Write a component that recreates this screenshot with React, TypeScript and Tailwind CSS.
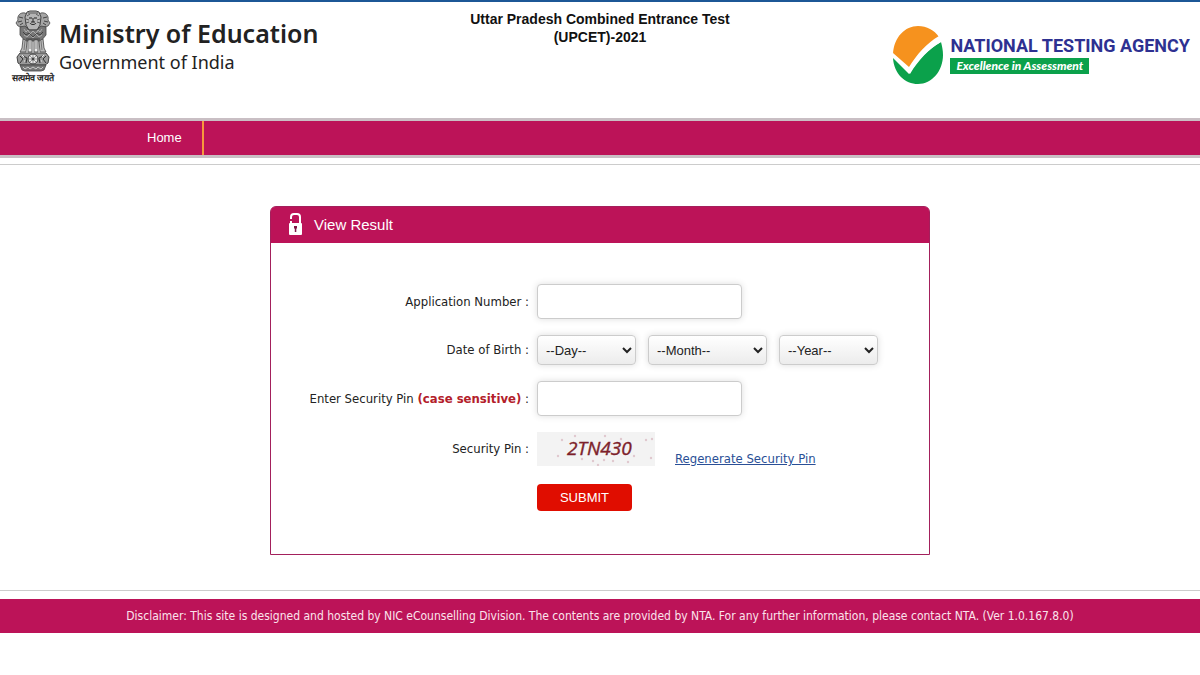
import type { ReactNode } from "react";

const days = Array.from({ length: 31 }, (_, i) => i + 1);
const months = ["January", "February", "March", "April", "May", "June", "July", "August", "September", "October", "November", "December"];
const years = Array.from({ length: 40 }, (_, i) => 2010 - i);

// specks of noise behind the captcha text
const specks = [
  [25, 8], [21, 24], [38, 4], [45, 27], [56, 29], [61, 33], [67, 28], [68, 4],
  [76, 29], [84, 7], [91, 30], [97, 24], [109, 8], [115, 7], [114, 26], [82, 20],
];

function Emblem() {
  return (
    <svg viewBox="0 0 36 62" className="h-[62px] w-9" fill="none" stroke="#444" aria-hidden="true">
      {/* side lions */}
      <path d="M10 3C5 2 2 6 3 10L1 13l2 3 4 1 3 8 5 2V6z" fill="#a5a5a5" strokeWidth=".8" />
      <path d="M26 3c5-1 8 3 7 7l2 3-2 3-4 1-3 8-5 2V6z" fill="#a5a5a5" strokeWidth=".8" />
      <path d="M4 7l4 1M3 12l4-1M5 15l3-2M32 7l-4 1M33 12l-4-1M31 15l-3-2" strokeWidth="1" />
      {/* front lion */}
      <path d="M12 2l3-1h6l3 1 2 5-1 8-3 5h-8l-3-5-1-8z" fill="#b5b5b5" strokeWidth="1" />
      <path d="M13 3h10M12 6l3-2M24 6l-3-2M11 9l3 1M25 9l-3 1M11 13l3-1M25 13l-3-1" strokeWidth=".8" />
      <path d="M14 8h3M19 8h3M18 8v4M15 13c1 2 5 2 6 0M16 12h4" stroke="#222" strokeWidth="1" />
      {/* mane */}
      <path d="M5 17l5-1 4 4h8l4-4 5 1v8l-5 6H10l-5-6z" fill="#777" strokeWidth=".8" />
      <path d="M9 19l2 3 2-2 2 4 3-3 3 3 2-4 2 2 2-3M9 25l3 2 3-3 3 4 3-4 3 3 3-2" stroke="#bbb" strokeWidth=".8" />
      <path d="M8 22l3 3 3-2 4 4 4-4 3 2 3-3M11 29h14" stroke="#333" strokeWidth=".8" />
      {/* legs */}
      <path d="M8 29l-1 9-2 4h6l1-11zM28 29l1 9 2 4h-6l-1-11z" fill="#bbb" strokeWidth=".8" />
      <path d="M13 30v12h4V30zM19 30v12h4V30z" fill="#eee" strokeWidth=".9" />
      <path d="M10 31l-1 9M15 31v8M21 31v8M26 31l1 9" stroke="#666" strokeWidth=".8" />
      {/* abacus with the wheel */}
      <path d="M5 43h26l3 4-1 6-3 2H6l-3-2-1-6z" fill="#999" strokeWidth="1" />
      <path d="M5 46l3 3-3 4M8 46l4 2-1 5M31 46l-3 3 3 4M28 46l-4 2 1 5" stroke="#333" strokeWidth="1" />
      <path d="M7 45l2 2M29 45l-2 2M9 51h1M26 51h1" stroke="#eee" strokeWidth="1" />
      <circle cx="18" cy="49" r="5" fill="#e8e8e8" strokeWidth="1" />
      <circle cx="18" cy="49" r="1.2" fill="#444" strokeWidth=".5" />
      <path d="M18 44v10M13 49h10M14.500 45.500l7 7M21.500 45.500l-7 7" strokeWidth=".5" />
      {/* base */}
      <path d="M5 55h26l-2 5-3 1H10l-3-1z" fill="#777" strokeWidth=".8" />
      <path d="M8 57l2 2 3-2 2 2 3-2 3 2 2-2 3 2 2-2" stroke="#ddd" strokeWidth=".8" />
    </svg>
  );
}

function AgencyMark() {
  return (
    <svg viewBox="0 0 50 58" className="h-[58px] w-[50px]" aria-hidden="true">
      <path d="M0 28C1 11 12 0 25 0c9 0 16 4 21 11C32 20 25 28 16 42z" fill="#f6921e" />
      <path d="M48 16c1 4 2 8 2 13 0 16-11 29-25 29C12 58 1 48 0 32l16 16C25 34 34 24 48 16z" fill="#0ba14b" />
      <path d="M0 27l16 14C24 28 34 17 46 10l2 6C36 23 26 33 17 48L0 31z" fill="#fff" />
    </svg>
  );
}

function Lock() {
  return (
    <svg viewBox="0 0 14 22" className="mb-[3px] h-[22px] w-3.5" aria-hidden="true">
      <path d="M3 6V4q0-3 3-3h3q3 0 3 3v7M3 8v3" fill="none" stroke="#fff" strokeWidth="2" />
      <rect x="1" y="10" width="13" height="12" rx="1" fill="#fff" />
      <path d="M6 13h3v2.500h-.7V19H6.800v-3.500H6z" fill="#7d1745" />
    </svg>
  );
}

function Label({ htmlFor, children }: { htmlFor?: string; children: ReactNode }) {
  return (
    <label htmlFor={htmlFor} className="text-right">
      {children} :
    </label>
  );
}

function DateSelect({ id, label, options, className }: {
  id: string;
  label: string;
  options: (string | number)[];
  className: string;
}) {
  return (
    <select
      id={id}
      aria-label={label}
      className={`h-[30px] rounded-sm border border-[#ccc] bg-linear-to-b from-white to-[#ececec] px-1 font-['Liberation_Sans',sans-serif] text-[13px] text-[#222] shadow-[0_0_7px_#ddd] ${className}`}
    >
      <option>--{label}--</option>
      {options.map((o) => (
        <option key={o}>{o}</option>
      ))}
    </select>
  );
}

const inputClass = "h-[35px] w-[205px] rounded-sm border border-[#ccc] bg-white px-2 shadow-[0_0_7px_#ddd] outline-none";

export default function App() {
  return (
    <div className="min-h-screen bg-white font-['DejaVu_Sans_Condensed','DejaVu_Sans',sans-serif] text-[13px] text-[#222]">
      <header className="grid h-[118px] grid-cols-3 items-start border-t-2 border-[#1c5796]">
        <div className="flex pt-2 pl-2.5">
          <div className="flex w-[46px] flex-col items-center">
            <Emblem />
            <span className="text-[9px] leading-[12px] font-bold whitespace-nowrap">सत्यमेव जयते</span>
          </div>
          <div className="pt-1.5 pl-[3px] font-['Noto_Sans',sans-serif] whitespace-nowrap">
            <div className="text-[25px] leading-[34px] font-semibold">Ministry of Education</div>
            <div className="text-[18px] leading-[24px]">Government of India</div>
          </div>
        </div>

        <h1 className="mx-auto w-[270px] pt-2 text-center font-['Liberation_Sans',sans-serif] text-sm leading-[18px] font-bold text-[#111]">
          Uttar Pradesh Combined Entrance Test (UPCET)-2021
        </h1>

        <div className="flex justify-end gap-[7px] pt-6 pr-2.5">
          <AgencyMark />
          <div className="flex flex-col items-start pt-2 whitespace-nowrap">
            <span className="font-['Roboto',sans-serif] text-[18px] leading-[24px] font-bold text-[#2e3191]">
              NATIONAL TESTING AGENCY
            </span>
            <span className="bg-[#0ba14b] px-1.5 font-['Lato',sans-serif] text-[12px] leading-[16px] font-black text-white italic">
              Excellence in Assessment
            </span>
          </div>
        </div>
      </header>

      <nav className="border-y-[3px] border-[#c9bfc4] bg-[#bc1358] pl-[127px]">
        <a
          href="#"
          className="inline-block h-[34px] border-r-2 border-[#f7983c] px-5 align-top font-['Liberation_Sans',sans-serif] text-[13px] leading-[34px] text-white"
        >
          Home
        </a>
      </nav>

      <main className="mt-[6px] border-y border-[#ccc] pt-[41px] pb-[35px]">
        <section className="mx-auto w-full max-w-[660px] rounded-t-md border border-[#a3205c]">
          <h2 className="flex h-9 items-center gap-3 rounded-t-sm bg-[#bc1358] pl-[17px] font-['Liberation_Sans',sans-serif] text-[15px] text-white">
            <Lock />
            View Result
          </h2>

          <form
            className="grid grid-cols-[258px_1fr] items-center gap-x-2 gap-y-4 pt-[41px] pb-[43px]"
            onSubmit={(e) => e.preventDefault()}
          >
            <Label htmlFor="application">Application Number</Label>
            <input id="application" type="text" className={inputClass} />

            <Label htmlFor="day">Date of Birth</Label>
            <div className="flex gap-3">
              <DateSelect id="day" label="Day" options={days} className="w-[99px]" />
              <DateSelect id="month" label="Month" options={months} className="w-[119px]" />
              <DateSelect id="year" label="Year" options={years} className="w-[99px]" />
            </div>

            <Label htmlFor="pin">
              Enter Security Pin <b className="text-[#b3202a]">(case sensitive)</b>
            </Label>
            <input id="pin" type="text" className={inputClass} />

            <span className="text-right">Security Pin :</span>
            <div className="flex items-end gap-5">
              <svg viewBox="0 0 118 34" className="h-[34px] w-[118px] bg-[#f3f3f3]">
                {specks.map(([x, y]) => (
                  <circle key={`${x}-${y}`} cx={x} cy={y} r="1.2" fill="#e0c8ce" />
                ))}
                <text x="30" y="23" fill="#7d1f2b" stroke="#7d1f2b" strokeWidth=".4" fontSize="19" fontStyle="italic" fontFamily="Open Sans, sans-serif">
                  2TN430
                </text>
              </svg>
              <a href="#" className="leading-[14px] text-[#2a4f96] underline">Regenerate Security Pin</a>
            </div>

            <button
              type="submit"
              className="col-start-2 mt-[2px] h-[27px] w-[95px] rounded-sm bg-[#e00d00] font-['Liberation_Sans',sans-serif] text-[13px] text-white"
            >
              SUBMIT
            </button>
          </form>
        </section>
      </main>

      <footer className="mt-2 bg-[#bc1358] py-2 text-center text-[12px] leading-[18px] text-[#fbe3ec]">
        Disclaimer: This site is designed and hosted by NIC eCounselling Division. The contents are provided by NTA. For any
        further information, please contact NTA. (Ver 1.0.167.8.0)
      </footer>
    </div>
  );
}
